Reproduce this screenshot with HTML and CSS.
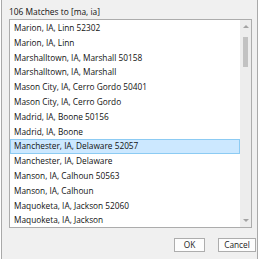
FILE: index.html
```html
<!DOCTYPE html>
<html>

<head>
    <meta charset="utf-8">
    <title>Matches</title>
    <link rel="stylesheet" href="styles.css">
</head>

<body>
    <div class="dialog">
        <div class="title">106 Matches to [ma, ia]</div>

        <div class="list">
            <div class="items">
                <div class="item">Marion, IA, Linn 52302</div>
                <div class="item">Marion, IA, Linn</div>
                <div class="item">Marshalltown, IA, Marshall 50158</div>
                <div class="item">Marshalltown, IA, Marshall</div>
                <div class="item">Mason City, IA, Cerro Gordo 50401</div>
                <div class="item">Mason City, IA, Cerro Gordo</div>
                <div class="item">Madrid, IA, Boone 50156</div>
                <div class="item">Madrid, IA, Boone</div>
                <div class="item selected">Manchester, IA, Delaware 52057</div>
                <div class="item">Manchester, IA, Delaware</div>
                <div class="item">Manson, IA, Calhoun 50563</div>
                <div class="item">Manson, IA, Calhoun</div>
                <div class="item">Maquoketa, IA, Jackson 52060</div>
                <div class="item">Maquoketa, IA, Jackson</div>
            </div>
            <div class="scrollbar">
                <span class="arrow up"></span>
                <div class="track">
                    <div class="thumb"></div>
                </div>
                <span class="arrow down"></span>
            </div>
        </div>

        <div class="buttons">
            <button class="btn ok">OK</button>
            <button class="btn cancel">Cancel</button>
        </div>
    </div>
</body>

</html>
```

FILE: styles.css
```css
html,
body {
    margin: 0;
    padding: 0;
    background: #ffffff;
}

div {
    box-sizing: border-box;
}

.dialog {
    margin-left: 1px;
    width: 257px;
    height: 259px;
    background: #f0f0f0;
    border-left: 1px solid #a9a9a9;
    border-right: 1px solid #a9a9a9;
    font-family: "Open Sans", "Noto Sans", sans-serif;
    font-size: 8.3px;
    color: #111111;
}

.title {
    height: 19px;
    padding: 4px 0 0 7px;
    line-height: 15px;
    font-size: 8.4px;
}

.list {
    display: flex;
    margin-left: 7px;
    width: 243px;
    height: 209px;
    background: #ffffff;
    border: 1px solid #acacac;
    overflow: hidden;
}

.items {
    flex: 1;
    padding-top: 1px;
}

.item {
    height: 14.8px;
    line-height: 14.8px;
    padding-left: 4px;
    white-space: nowrap;
    overflow: hidden;
}

.item.selected {
    background: #cce8ff;
    border: 1px solid #8ccbf3;
    line-height: 12.8px;
    padding-left: 3px;
}

.scrollbar {
    width: 11px;
    background: #ededed;
    display: flex;
    flex-direction: column;
    align-items: center;
    padding: 5px 0;
}

.arrow {
    width: 0;
    height: 0;
    border-left: 3px solid transparent;
    border-right: 3px solid transparent;
}

.arrow.up {
    border-bottom: 3px solid #a3a3a3;
}

.arrow.down {
    border-top: 3px solid #a3a3a3;
}

.track {
    flex: 1;
    padding-top: 9px;
}

.thumb {
    width: 5px;
    height: 30px;
    background: #c2c2c2;
}

.buttons {
    display: flex;
    justify-content: flex-end;
    gap: 13px;
    margin-top: 10px;
    padding-right: 1px;
}

.btn {
    height: 14px;
    padding: 0;
    background: #fdfdfd;
    border: 1px solid #adadad;
    font-family: "Open Sans", "Noto Sans", sans-serif;
    font-size: 8.3px;
    line-height: 12px;
    color: #222222;
}

.btn.ok {
    width: 31px;
}

.btn.cancel {
    width: 38px;
}

.btn:focus {
    outline: none;
}
```
